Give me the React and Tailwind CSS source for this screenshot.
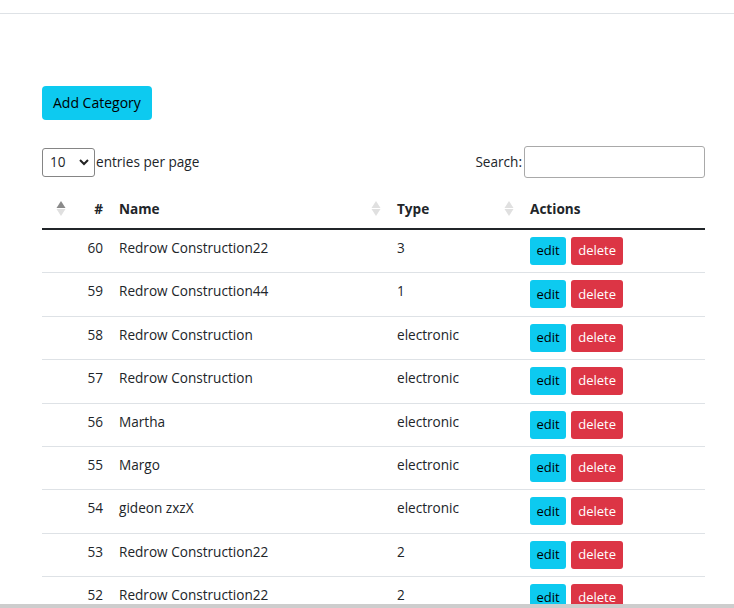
import React from 'react';

const rows = [
    { id: 60, name: 'Redrow Construction22', type: '3' },
    { id: 59, name: 'Redrow Construction44', type: '1' },
    { id: 58, name: 'Redrow Construction', type: 'electronic' },
    { id: 57, name: 'Redrow Construction', type: 'electronic' },
    { id: 56, name: 'Martha', type: 'electronic' },
    { id: 55, name: 'Margo', type: 'electronic' },
    { id: 54, name: 'gideon zxzX', type: 'electronic' },
    { id: 53, name: 'Redrow Construction22', type: '2' },
    { id: 52, name: 'Redrow Construction22', type: '2' },
];

function Sorter({ active }) {
    return (
        <svg width="10" height="15" viewBox="0 0 10 15" className="shrink-0">
            <path d="M5 0 L9.5 7 L0.5 7 Z" fill={active ? '#8a8a8a' : '#e0e0e0'} />
            <path d="M5 15 L9.5 8 L0.5 8 Z" fill="#e0e0e0" />
        </svg>
    );
}

export default function App() {
    return (
        <div className="min-h-[608px] bg-white text-[#212529]" style={{ fontFamily: '"Open Sans", "Noto Sans", sans-serif' }}>
            <div className="h-[14px] border-b border-[#dee2e6]"></div>

            <div className="ml-[42px] w-[663px] pt-[72px]">
                <button className="h-[34px] px-[11px] bg-[#0dcaf0] rounded-[4px] text-[14px] text-black leading-none">
                    Add Category
                </button>

                <div className="mt-[26px] flex items-center justify-between text-[13.6px]">
                    <div className="flex items-center">
                        <div className="relative w-[53px] h-[29px] border border-[#858585] rounded-[3px] flex items-center pl-[7px]">
                            <span>10</span>
                            <svg width="10" height="7" viewBox="0 0 10 7" className="absolute right-[5px] top-[10px]">
                                <path d="M1 1 L5 5 L9 1" stroke="#222" strokeWidth="2" fill="none" />
                            </svg>
                        </div>
                        <span className="ml-[1px]">entries per page</span>
                    </div>
                    <div className="flex items-center">
                        <span>Search:</span>
                        <div className="ml-[2px] w-[181px] h-[32px] border border-[#a9a9a9] rounded-[3px]"></div>
                    </div>
                </div>

                <table className="mt-[12px] w-full border-collapse text-[13.6px]">
                    <thead>
                        <tr className="border-b-2 border-[#212529]">
                            <th className="w-[69px] h-[39px] px-2 font-bold">
                                <div className="flex items-center justify-between pl-[6px]">
                                    <Sorter active />
                                    <span>#</span>
                                </div>
                            </th>
                            <th className="w-[278px] px-2 font-bold text-left">
                                <div className="flex items-center justify-between">
                                    <span>Name</span>
                                    <Sorter />
                                </div>
                            </th>
                            <th className="w-[133px] px-2 font-bold text-left">
                                <div className="flex items-center justify-between">
                                    <span>Type</span>
                                    <Sorter />
                                </div>
                            </th>
                            <th className="px-2 font-bold text-left">Actions</th>
                        </tr>
                    </thead>
                    <tbody>
                        {rows.map((row) => (
                            <tr key={row.id} className="border-b border-[#dee2e6]">
                                <td className="px-2 pt-[7px] align-top text-right leading-[22px]">{row.id}</td>
                                <td className="px-2 pt-[7px] align-top leading-[22px]">{row.name}</td>
                                <td className="px-2 pt-[7px] align-top leading-[22px]">{row.type}</td>
                                <td className="px-2 pt-[7px] pb-[7.375px] align-top">
                                    <div className="flex gap-[5px]">
                                        <button className="h-[28px] px-[6.5px] bg-[#0dcaf0] rounded-[3px] text-[13px] text-black">edit</button>
                                        <button className="h-[28px] px-[7px] bg-[#dc3545] rounded-[3px] text-[13px] text-white">delete</button>
                                    </div>
                                </td>
                            </tr>
                        ))}
                    </tbody>
                </table>
            </div>

            <div className="fixed left-0 right-0 bottom-0 h-[4px] bg-[#cdcdcd]"></div>
        </div>
    );
}
